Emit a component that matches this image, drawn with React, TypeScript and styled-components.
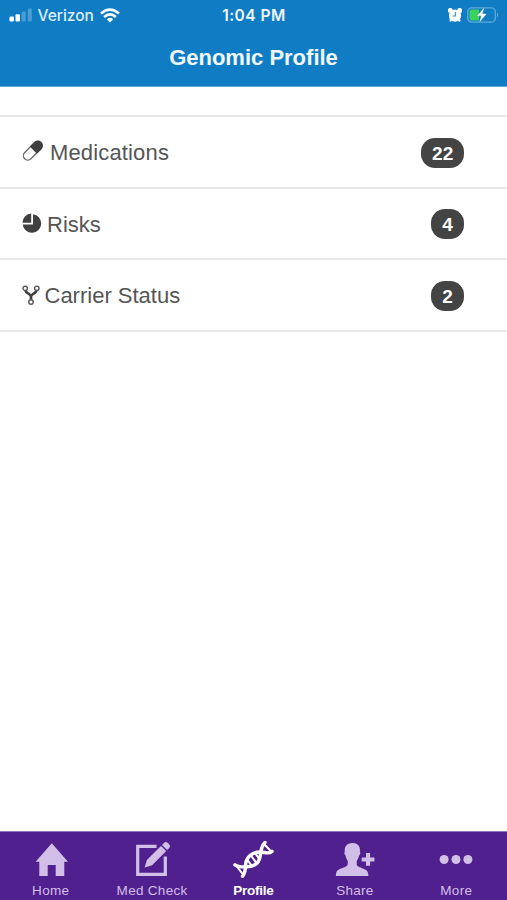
import React from "react";
import styled, { createGlobalStyle } from "styled-components";

const GlobalStyle = createGlobalStyle`
  * { box-sizing: border-box; }
  html, body, #root { height: 100%; margin: 0; }
  body { overflow: hidden; background: #fff; }
`;

const Screen = styled.div`
  display: flex;
  flex-direction: column;
  width: 100%;
  height: 900px;
  background: #fff;
  color: #555;
  font-family: "Liberation Sans", Arial, sans-serif;
`;

const Header = styled.header`
  height: 87px;
  background: #0f7cc4;
  border-bottom: 1px solid #5ba5d7;
  color: #f0f8ff;
`;

const StatusBar = styled.div`
  display: grid;
  grid-template-columns: 1fr auto 1fr;
  align-items: center;
  height: 30px;
  padding: 0 8px 0 9px;
  font-family: Inter, sans-serif;
  font-size: 15.5px;
`;

const Carrier = styled.div`
  display: flex;
  align-items: center;
  color: #dceefb;
  font-weight: 500;

  span { margin: 0 6px 0 5.5px; }
`;

const Clock = styled.div`
  font-weight: 600;
  letter-spacing: 0.5px;
`;

const Indicators = styled.div`
  display: flex;
  align-items: center;
  justify-content: flex-end;
  gap: 5px;
`;

const Title = styled.h1`
  margin: 14px 0 0;
  font-size: 22px;
  line-height: 28px;
  text-align: center;
`;

const Content = styled.main`
  flex: 1;
  padding-top: 28px;
`;

const List = styled.ul`
  margin: 0;
  padding: 0;
  list-style: none;
  border-top: 2px solid #e7e7e7;
`;

const Row = styled.li`
  display: flex;
  align-items: center;
  height: 71.5px;
  padding: 0 43px 0 22px;
  border-bottom: 2px solid #e7e7e7;
  font-size: 22px;
  line-height: 28px;
`;

const RowIcon = styled.span<{ $gap: number }>`
  display: flex;
  margin-right: ${(p) => p.$gap}px;
`;

const RowLabel = styled.span<{ $tracking: number }>`
  flex: 1;
  padding-top: 3px;
  letter-spacing: ${(p) => p.$tracking}px;
`;

const Badge = styled.span`
  min-width: 33px;
  height: 30px;
  margin-top: 2px;
  padding: 2px 10.8px 0;
  border-radius: 14px;
  background: #444;
  color: #fff;
  font-size: 19px;
  font-weight: 700;
  line-height: 28px;
  text-align: center;
`;

const TabBar = styled.nav`
  display: grid;
  grid-template-columns: repeat(5, 1fr);
  height: 69px;
  border-top: 1px solid #8f79b4;
  background: #51208f;
`;

const Tab = styled.div<{ $active?: boolean }>`
  display: flex;
  flex-direction: column;
  align-items: center;
  padding-top: 6px;
  color: ${(p) => (p.$active ? "#fff" : "#d2bfe8")};
  font-size: 13.5px;
  font-weight: ${(p) => (p.$active ? 700 : 400)};
  line-height: 16px;
  letter-spacing: ${(p) => (p.$active ? -0.25 : 0.3)}px;

  svg { display: block; margin-bottom: 5px; }
`;

const SignalIcon = () => (
  <svg width="23" height="14" viewBox="0 0 23 14" fill="#fff">
    <rect x="0.5" y="8.5" width="4.4" height="5" rx="1.2" />
    <rect x="6.5" y="6.3" width="4.4" height="7.2" rx="1.2" />
    <rect x="12.7" y="3.6" width="4" height="9.9" rx="1.2" opacity=".25" />
    <rect x="18.8" y="0.5" width="4" height="13" rx="1.2" opacity=".25" />
  </svg>
);

const WifiIcon = () => (
  <svg width="20" height="15" viewBox="0 0 20 15" fill="none" stroke="#fff" strokeWidth="2.7">
    <path d="M1 5.5Q10-2.2 19 5.5M4.1 8.9Q10 3.7 15.9 8.9" />
    <path d="M6.8 11.2Q10 8.5 13.2 11.2L10 14.5Z" fill="#fff" stroke="none" />
  </svg>
);

const AlarmIcon = () => (
  <svg width="14" height="15" viewBox="0 0 14 15" fill="#fff">
    <circle cx="7" cy="7.6" r="6.1" />
    <path d="M.4 4.6A2.6 2.6 0 0 1 4.3.9L5 3 2.5 5zM9.7.9a2.6 2.6 0 0 1 3.9 3.7L11.5 5 9 3zM2 10.5l2 1.5-1.2 2-1.4-.9zm10 0-2 1.5 1.2 2 1.4-.9z" />
    <path d="M7.4 4v4H4.5" fill="none" stroke="#3e93cc" strokeWidth="1.1" />
  </svg>
);

const BatteryIcon = () => (
  <svg width="32" height="16" viewBox="0 0 32 16">
    <rect x=".8" y=".8" width="27.5" height="14.4" rx="4" fill="none" stroke="#5ea9dc" strokeWidth="1.3" />
    <path d="M30 5.4q2 2.4 0 5.2z" fill="#74b5e2" />
    <path d="M4.5 2.5H12V13.5H4.5q-2 0-2-2v-7q0-2 2-2z" fill="#3bd25c" />
    <path d="m16.7 1.5-6.2 7.3h4L12.8 14.5l6.4-7.4h-4z" fill="#fff" stroke="#fff" strokeWidth=".4" />
  </svg>
);

const PillIcon = () => (
  <svg width="22" height="22" viewBox="0 0 22 22" overflow="visible">
    <g transform="rotate(-45 11 9.5)">
      <rect x="-0.7" y="5.1" width="23" height="8.8" rx="4.4" fill="#fff" stroke="#666" strokeWidth="1.3" />
      <path d="M11.5 4.5h6.3a5 5 0 0 1 0 10h-6.3z" fill="#3f3f3f" />
    </g>
  </svg>
);

const PieIcon = () => (
  <svg width="20" height="20" viewBox="0 0 20 20" fill="#404040">
    <path d="M11 1.2A9.3 9.3 0 1 1 .7 11.5H11z" />
    <path d="M9.2.6v9.1H.4A9.2 9.2 0 0 1 9.2.6z" />
  </svg>
);

const ForkIcon = () => (
  <svg width="18" height="20" viewBox="0 0 18 20" fill="none" stroke="#555">
    <path d="M3.4 5.1C3.6 8.6 9 8.5 9 11.4v3.2M14.6 5.1C14.4 8.6 9 8.5 9 11.4" stroke="#404040" strokeWidth="2.7" />
    <g strokeWidth="1.4" fill="#fff">
      <circle cx="3.2" cy="3.3" r="2.2" />
      <circle cx="14.8" cy="3.3" r="2.2" />
      <circle cx="9" cy="17" r="2.2" />
    </g>
  </svg>
);

const TabSvg = ({ children }: { children: React.ReactNode }) => (
  <svg width="44" height="40" viewBox="0 0 44 40" fill="currentColor">
    {children}
  </svg>
);

const HomeIcon = () => (
  <TabSvg>
    <path d="M22.8 5.3 39 23.8h-3.7V38h-8.6V27h-8v11h-8.4V23.8H6.6z" />
  </TabSvg>
);

const EditIcon = () => (
  <TabSvg>
    <path d="M26.5 8.4H7.7v27.9h27.6V18.5" fill="none" stroke="currentColor" strokeWidth="3.2" />
    <path d="m14.6 29.4 2.3-7.4L31 7.9l5.2 5.2-14.1 14.1zM32 6.9l2-1.9a2.7 2.7 0 0 1 3.8 0l1.3 1.3a2.7 2.7 0 0 1 0 3.8l-1.9 2z" />
  </TabSvg>
);

const DnaIcon = () => (
  <TabSvg>
    <g fill="none" stroke="currentColor" strokeWidth="3.4" strokeLinecap="round">
      <path d="M4 26.8C7.5 29.5 12 29 16.5 28.8C25 28.5 28.8 23 29.5 16.5C30 11.5 31 7.5 34 4.5" />
      <path d="M11.5 38.3C15 34.5 14 30 14.7 25.5C15.8 19 21 14 29 14C34 14 37.5 16.5 41 13.4" />
      <path d="M5.5 28 11 35.2M33.5 6.5l6 6.2M20.3 18l5.2 7.2M16.2 21.5l4 5.6M24.5 15.7l3.8 5.2" strokeWidth="2" />
    </g>
  </TabSvg>
);

const ShareIcon = () => (
  <TabSvg>
    <path d="M19.5 5c5 0 8 3 7.4 8.5.8.7.4 3.2-.8 4.2-.6 2.6-2 4.2-2.4 5.4v3c0 2 1.5 2.7 5.4 4.1 4.5 1.5 6.3 2.8 6.3 7.8H2.9c0-5 1.6-6.3 5.9-7.8 4-1.4 6-2.1 6-4.1v-3c-.6-1.2-1.7-2.8-2.2-5.4-1.2-1-1.6-3.5-.8-4.2C11.2 8 14.5 5 19.5 5z" />
    <path d="M33 15.1h4.1v4.3h4.3v4.1h-4.3v4.3H33v-4.3h-4.3v-4.1H33z" />
  </TabSvg>
);

const MoreIcon = () => (
  <TabSvg>
    <circle cx="10.1" cy="21.5" r="4.5" />
    <circle cx="22" cy="21.5" r="4.5" />
    <circle cx="33.9" cy="21.5" r="4.5" />
  </TabSvg>
);

const rows = [
  { label: "Medications", count: 22, icon: <PillIcon />, gap: 6, tracking: 0.15 },
  { label: "Risks", count: 4, icon: <PieIcon />, gap: 5, tracking: 0 },
  { label: "Carrier Status", count: 2, icon: <ForkIcon />, gap: 4.5, tracking: 0 },
];

const tabs = [
  { label: "Home", icon: <HomeIcon /> },
  { label: "Med Check", icon: <EditIcon /> },
  { label: "Profile", icon: <DnaIcon />, active: true },
  { label: "Share", icon: <ShareIcon /> },
  { label: "More", icon: <MoreIcon /> },
];

export default function App() {
  return (
    <Screen>
      <GlobalStyle />
      <Header>
        <StatusBar>
          <Carrier>
            <SignalIcon />
            <span>Verizon</span>
            <WifiIcon />
          </Carrier>
          <Clock>1:04 PM</Clock>
          <Indicators>
            <AlarmIcon />
            <BatteryIcon />
          </Indicators>
        </StatusBar>
        <Title>Genomic Profile</Title>
      </Header>
      <Content>
        <List>
          {rows.map((row) => (
            <Row key={row.label}>
              <RowIcon $gap={row.gap}>{row.icon}</RowIcon>
              <RowLabel $tracking={row.tracking}>{row.label}</RowLabel>
              <Badge>{row.count}</Badge>
            </Row>
          ))}
        </List>
      </Content>
      <TabBar>
        {tabs.map((tab) => (
          <Tab key={tab.label} $active={tab.active}>
            {tab.icon}
            {tab.label}
          </Tab>
        ))}
      </TabBar>
    </Screen>
  );
}
